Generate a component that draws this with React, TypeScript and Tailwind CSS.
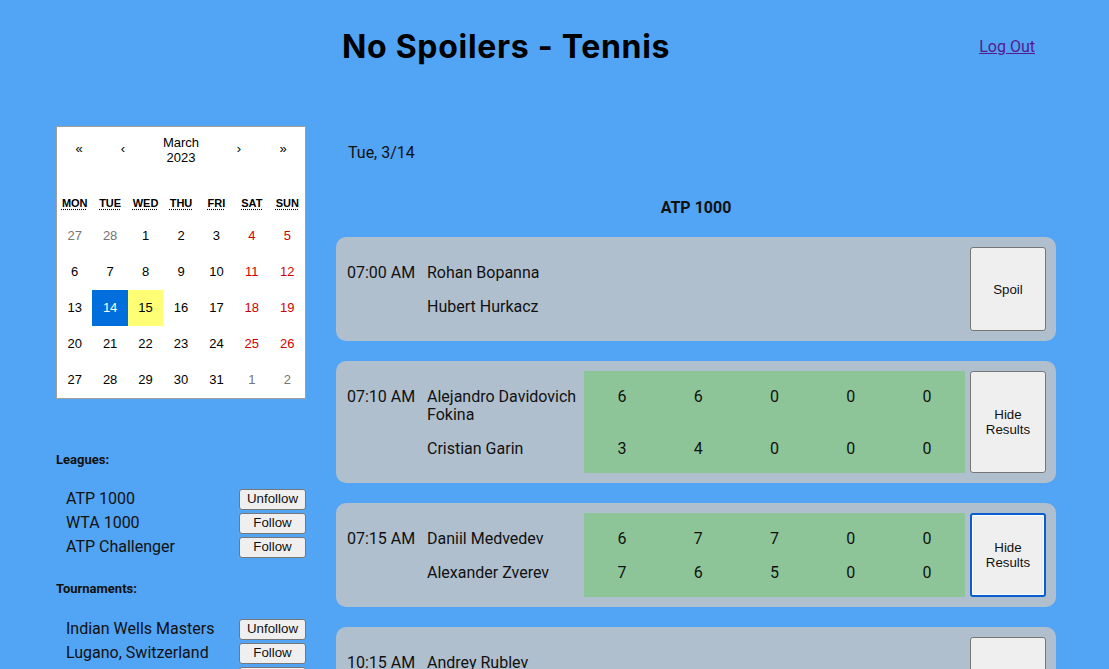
const weekdays = ["MON", "TUE", "WED", "THU", "FRI", "SAT", "SUN"];

type Day = { n: number; other?: boolean };

const days: Day[] = [
  { n: 27, other: true },
  { n: 28, other: true },
  ...Array.from({ length: 31 }, (_, i) => ({ n: i + 1 })),
  { n: 1, other: true },
  { n: 2, other: true },
];

const leagues = [
  { name: "ATP 1000", following: true },
  { name: "WTA 1000", following: false },
  { name: "ATP Challenger", following: false },
];

const tournaments = [
  { name: "Indian Wells Masters", following: true },
  { name: "Lugano, Switzerland", following: false },
  { name: "Phoenix Challenger", following: false },
];

type Match = {
  time: string;
  players: { name: string; tall?: boolean; sets?: number[] }[];
  shown: boolean;
  focused?: boolean;
};

const matches: Match[] = [
  {
    time: "07:00 AM",
    players: [{ name: "Rohan Bopanna" }, { name: "Hubert Hurkacz" }],
    shown: false,
  },
  {
    time: "07:10 AM",
    players: [
      { name: "Alejandro Davidovich Fokina", tall: true, sets: [6, 6, 0, 0, 0] },
      { name: "Cristian Garin", sets: [3, 4, 0, 0, 0] },
    ],
    shown: true,
  },
  {
    time: "07:15 AM",
    players: [
      { name: "Daniil Medvedev", sets: [6, 7, 7, 0, 0] },
      { name: "Alexander Zverev", sets: [7, 6, 5, 0, 0] },
    ],
    shown: true,
    focused: true,
  },
  {
    time: "10:15 AM",
    players: [{ name: "Andrey Rublev" }, { name: "Taylor Fritz" }],
    shown: false,
  },
];

const Calendar = () => (
  <div className="w-[250px] border border-[#a0a096] bg-white font-['Liberation_Sans',Arial,sans-serif] text-black">
    {/* navigation */}
    <div className="flex h-[44px] mb-[16px]">
      <button className="min-w-[44px] text-[13px]">«</button>
      <button className="min-w-[44px] text-[13px]">‹</button>
      <div className="flex-1 flex flex-col items-center justify-center pt-[2px] text-[13px] leading-[15px]">
        <span>March</span>
        <span>2023</span>
      </div>
      <button className="min-w-[44px] text-[13px]">›</button>
      <button className="min-w-[44px] text-[13px]">»</button>
    </div>
    {/* weekdays */}
    <div className="grid grid-cols-7 h-[31px] pt-[1px] items-center text-center text-[11px] font-bold">
      {weekdays.map((d) => (
        <span key={d} className="underline decoration-dotted underline-offset-2">
          {d}
        </span>
      ))}
    </div>
    {/* days */}
    <div className="grid grid-cols-7 text-[13px]">
      {days.map((d, i) => {
        const weekend = i % 7 >= 5;
        const selected = !d.other && d.n === 14;
        const today = !d.other && d.n === 15;
        let cls = "text-black";
        if (d.other) cls = "text-[#757575]";
        else if (weekend) cls = "text-[#d10000]";
        if (selected) cls = "bg-[#006edc] text-white";
        if (today) cls = "bg-[#ffff76] text-black";
        return (
          <div key={i} className={`h-[36px] flex items-center justify-center ${cls}`}>
            {d.n}
          </div>
        );
      })}
    </div>
  </div>
);

const FollowRow = ({ name, following }: { name: string; following: boolean }) => (
  <div className="flex items-center justify-between h-[24px] pl-[10px]">
    <span className="text-[16px]">{name}</span>
    <button className="w-[67px] h-[21px] rounded-[3px] border border-[#767676] bg-[#efefef] text-[13.3px] font-['Liberation_Sans',Arial,sans-serif] leading-none">
      {following ? "Unfollow" : "Follow"}
    </button>
  </div>
);

const MatchCard = ({ m }: { m: Match }) => (
  <div className="flex rounded-[10px] bg-[#b0bfcd] p-[10px]">
    <div className="w-[238px] flex flex-col justify-center py-[8px]">
      {m.players.map((p, i) => (
        <div key={i} className={`flex pt-[9px] pb-[7px] leading-[18px] ${p.tall ? "min-h-[52px]" : "min-h-[34px]"}`}>
          <span className="w-[81px] pl-[1px] shrink-0">{i === 0 ? m.time : ""}</span>
          <span className="flex-1">{p.name}</span>
        </div>
      ))}
    </div>
    <div className={`w-[381px] flex flex-col justify-center py-[8px] ${m.shown ? "bg-[#8dc598]" : ""}`}>
      {m.shown &&
        m.players.map((p, i) => (
          <div key={i} className={`grid grid-cols-5 pt-[9px] pb-[7px] leading-[18px] text-center ${p.tall ? "h-[52px]" : "h-[34px]"}`}>
            {p.sets?.map((s, j) => (
              <span key={j}>{s}</span>
            ))}
          </div>
        ))}
    </div>
    <button
      className={`ml-[5px] w-[76px] rounded-[3px] bg-[#efefef] text-[13.3px] leading-[15px] font-['Liberation_Sans',Arial,sans-serif] px-[6px] ${
        m.focused
          ? "border-2 border-[#0a5fd0] shadow-[inset_0_0_0_1px_white]"
          : "border border-[#767676]"
      }`}
    >
      {m.shown ? "Hide Results" : "Spoil"}
    </button>
  </div>
);

export default function App() {
  return (
    <div className="min-h-screen bg-[#52a4f5] font-['Roboto',sans-serif] text-[#111] text-[16px]">
      <header className="flex items-center justify-between h-[94px] pl-[342px] pr-[74px]">
        <h1 className="text-[32px] font-bold leading-[38px] tracking-[0.7px] font-['Inter',sans-serif] text-black">No Spoilers - Tennis</h1>
        <a href="#" className="text-[#551a8b] underline">
          Log Out
        </a>
      </header>

      <div className="flex gap-[30px] pl-[56px] pt-[32px]">
        <aside className="w-[250px] shrink-0">
          <Calendar />
          <h3 className="mt-[53px] text-[13px] font-bold leading-[16px]">Leagues:</h3>
          <div className="mt-[19px]">
            {leagues.map((l) => (
              <FollowRow key={l.name} {...l} />
            ))}
          </div>
          <h3 className="mt-[22px] text-[13px] font-bold leading-[16px]">Tournaments:</h3>
          <div className="mt-[20px]">
            {tournaments.map((t) => (
              <FollowRow key={t.name} {...t} />
            ))}
          </div>
        </aside>

        <main className="w-[720px] shrink-0">
          <p className="pt-[17px] pl-[12px] leading-[20px]">Tue, 3/14</p>
          <h2 className="mt-[35px] text-center font-bold leading-[20px]">ATP 1000</h2>
          <div className="mt-[19px] flex flex-col gap-[20px]">
            {matches.map((m) => (
              <MatchCard key={m.time} m={m} />
            ))}
          </div>
        </main>
      </div>
    </div>
  );
}
